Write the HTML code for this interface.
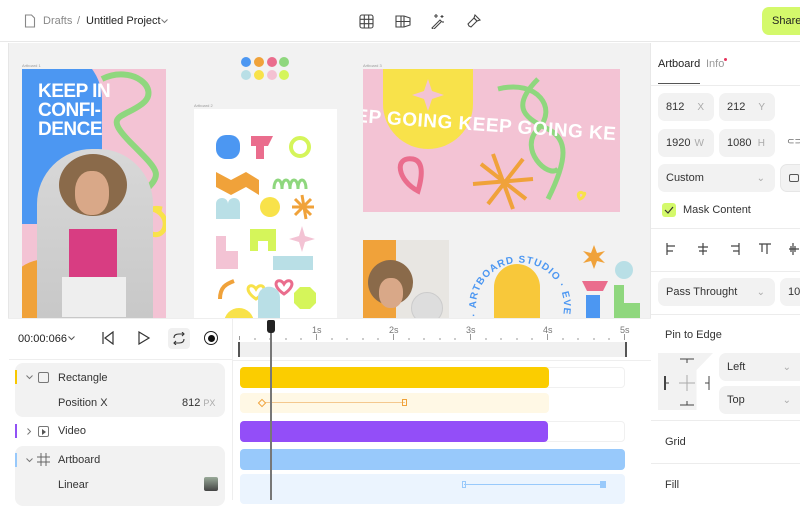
<!DOCTYPE html>
<html><head><meta charset="utf-8"><style>
*{box-sizing:border-box;margin:0;padding:0}
body{width:800px;height:500px;overflow:hidden;background:#fff;font-family:"Liberation Sans",sans-serif;position:relative;color:#222}
.a{position:absolute}
.t{font-size:11px;color:#333;white-space:nowrap}
.inp{position:absolute;background:#f2f2f2;border-radius:7px;font-size:11px;color:#333;padding-left:8px;display:flex;align-items:center}
.inp span{position:absolute;right:10px;color:#aaa;font-size:10px}
.dv{position:absolute;left:651px;right:0;height:1px;background:#ececec}
.dot{position:absolute;width:10px;height:10px;border-radius:50%}
.lbl{position:absolute;font-size:4px;color:#999}
</style></head><body>
<!-- top bar -->
<div class="a" style="left:0;top:0;width:800px;height:42px;border-bottom:1px solid #e8e8e8;background:#fff"></div>
<svg class="a" style="left:24px;top:14px" width="12" height="14" viewBox="0 0 12 14"><path d="M1.5 1h6l3 3v9h-9z" fill="none" stroke="#888" stroke-width="1.1"/></svg>
<div class="a t" style="left:43px;top:15px;font-size:11px;color:#888">Drafts</div>
<div class="a t" style="left:77px;top:15px;font-size:11px;color:#888">/</div>
<div class="a t" style="left:86px;top:15px;font-size:11px;color:#222">Untitled Project</div>
<svg class="a" style="left:161px;top:19px" width="7" height="5"><path d="M.5 .5l3 3 3-3" fill="none" stroke="#777"/></svg>
<svg class="a" style="left:359px;top:14px" width="15" height="15"><g fill="none" stroke="#444" stroke-width="1.1"><rect x="1" y="1" width="13" height="13" rx="2"/><path d="M5.3 1v13M9.7 1v13M1 5.3h13M1 9.7h13"/></g></svg>
<svg class="a" style="left:395px;top:14px" width="16" height="15"><g fill="none" stroke="#444" stroke-width="1.1"><path d="M1 2h8l6 2v7l-6 2H1z"/><path d="M6 2v11M9 2v11M1 7.5h14"/></g></svg>
<svg class="a" style="left:430px;top:13px" width="16" height="16"><g fill="none" stroke="#444" stroke-width="1.1"><path d="M2 15l8-8 1.5 1.5-8 8z"/><path d="M6 1v4M4 3h4M12 2v3M10.5 3.5h3M13 8v2"/></g></svg>
<svg class="a" style="left:466px;top:13px" width="16" height="16"><g fill="none" stroke="#444" stroke-width="1.1"><path d="M9 2l5 5-3 1-3-3z"/><path d="M8 5l3 3-6 6-2-1-1-2z"/></g></svg>
<div class="a" style="left:762px;top:7px;width:50px;height:28px;background:#d4f96b;border-radius:7px;font-size:11px;padding:8px 0 0 10px;color:#222">Share</div>

<!-- canvas -->
<div class="a" style="left:8px;top:43px;width:643px;height:275px;background:#f2f2f2"></div>
<div class="a" style="left:8px;top:43px;width:1px;height:457px;background:#e6e6e6"></div>
<div class="lbl" style="left:22px;top:63px">Artboard 1</div>
<div class="lbl" style="left:194px;top:103px">Artboard 2</div>
<div class="lbl" style="left:363px;top:63px">Artboard 3</div>

<!-- dots -->
<div class="dot" style="left:241px;top:57px;background:#4c97f2"></div>
<div class="dot" style="left:254px;top:57px;background:#f0a23a"></div>
<div class="dot" style="left:267px;top:57px;background:#ea6d8d"></div>
<div class="dot" style="left:279px;top:57px;background:#8fd77e"></div>
<div class="dot" style="left:241px;top:70px;background:#b9dfe6"></div>
<div class="dot" style="left:254px;top:70px;background:#f8e24a"></div>
<div class="dot" style="left:267px;top:70px;background:#f4c1d2"></div>
<div class="dot" style="left:279px;top:70px;background:#d5f55a"></div>

<!-- artboard 1 -->
<div class="a" style="left:22px;top:69px;width:144px;height:249px;background:#f3c3d4;overflow:hidden">
 <div class="a" style="left:-30px;top:-20px;width:110px;height:175px;background:#4c97f2;border-radius:0 50px 50px 0"></div>
 <div class="a" style="left:-20px;top:190px;width:90px;height:90px;background:#f0a23a;border-radius:50%"></div>
 <svg class="a" style="left:0;top:0" width="144" height="249"><g fill="none" stroke="#8fd77e" stroke-width="6"><path d="M80 10c30-15 60 10 40 25s-40 10-10 40 30 30 10 50"/></g><g fill="none" stroke="#f8e24a" stroke-width="5"><path d="M140 140c-20-5-25 20-10 25s20-20 0-25"/></g></svg>
 <div class="a" style="left:16px;top:13px;font:900 19px/19px 'Liberation Sans',sans-serif;color:#fff;letter-spacing:-.5px">KEEP IN<br>CONFI-<br>DENCE</div>
 <div class="a" style="left:15px;top:80px;width:116px;height:169px;background:linear-gradient(#d8d8d8,#c8c8c8);border-radius:55px 55px 0 0;overflow:hidden">
  <div class="a" style="left:22px;top:5px;width:68px;height:62px;background:#8a6a4a;border-radius:50%"></div>
  <div class="a" style="left:38px;top:22px;width:34px;height:44px;background:#d9a888;border-radius:45%"></div>
  <div class="a" style="left:32px;top:80px;width:48px;height:50px;background:#d83d82"></div>
  <div class="a" style="left:25px;top:128px;width:64px;height:40px;background:#eee"></div>
 </div>
</div>

<!-- artboard 2 -->
<div class="a" style="left:194px;top:109px;width:143px;height:209px;background:#fff;overflow:hidden">
 <svg width="143" height="209">
  <rect x="22" y="26" width="24" height="24" rx="10" fill="#4c97f2"/>
  <path d="M57 27h22l-5 10h-4l0 13h-8l0-13h-5z" fill="#ea6d8d"/>
  <circle cx="106" cy="38" r="9" fill="none" stroke="#d5f55a" stroke-width="4"/>
  <path d="M22 63l15 8 15-8 13 8v15l-13-8-15 8-15-8z" fill="#f0a23a"/>
  <path d="M88 80c0-12 8-12 8 0M96 80c0-12 8-12 8 0M104 80c0-12 8-12 8 0M80 80c0-12 8-12 8 0" fill="none" stroke="#8fd77e" stroke-width="3"/>
  <path d="M22 110v-15c0-8 12-8 12 0 0-8 12-8 12 0v15z" fill="#b9dfe6"/>
  <circle cx="76" cy="98" r="10" fill="#f8e24a"/>
  <path d="M108 86l4 24M98 98h22M101 90l16 16M117 90l-16 16" stroke="#f0a23a" stroke-width="3"/>
  <path d="M22 127h10v15h12v18H22z" fill="#f3c3d4"/>
  <path d="M56 120h26v22h-8v-10h-10v10h-8z" fill="#d5f55a"/>
  <path d="M108 117l3 10 10 3-10 3-3 10-3-10-10-3 10-3z" fill="#f3c3d4"/>
  <rect x="79" y="147" width="40" height="14" fill="#b9dfe6"/>
  <path d="M26 190c0-12 6-15 14-18" stroke="#f0a23a" stroke-width="4" fill="none"/>
  <path d="M62 180c-5-8-15 0 0 10 15-10 5-18 0-10z" fill="none" stroke="#f8e24a" stroke-width="3"/>
  <path d="M90 175c-5-8-15 0 0 10 15-10 5-18 0-10z" fill="none" stroke="#ea6d8d" stroke-width="3"/>
  <path d="M64 209v-20c0-15 22-15 22 0v20z" fill="#b9dfe6"/>
  <path d="M100 184l6-6h10l6 6v10l-6 6h-10l-6-6z" fill="#d5f55a"/>
  <circle cx="45" cy="214" r="15" fill="#f8e24a"/>
 </svg>
</div>

<!-- artboard 3 -->
<div class="a" style="left:363px;top:69px;width:257px;height:143px;background:#f3c3d4;overflow:hidden">
 <div class="a" style="left:20px;top:-20px;width:90px;height:100px;background:#f8e24a;border-radius:0 0 45px 45px"></div>
 <svg class="a" style="left:0;top:0" width="257" height="143">
  <path d="M65 10l4 12 12 4-12 4-4 12-4-12-12-4 12-4z" fill="#f3c3d4"/>
  <g fill="none" stroke="#8fd77e" stroke-width="5"><path d="M135 20c40-10 60 20 40 40s10 50 20 40M175 10c-30 30-10 40 10 50s20 30 0 70"/></g>
  <path d="M55 122c-20-10-25-35-5-32 10 2 10 15 5 32z" fill="none" stroke="#ea6d8d" stroke-width="5"/>
  <g stroke="#f0a23a" stroke-width="4"><path d="M130 85l20 55M110 115l60 -5M118 95l45 35M160 90l-35 45"/></g>
  <path d="M221 125c-4-4-8 0-4 5 4-1 6-8 4-5z" stroke="#f8e24a" stroke-width="3" fill="none"/>
 </svg>
 <div class="a" style="left:-8px;top:46px;font:900 19px 'Liberation Sans',sans-serif;color:#fff;transform:rotate(4deg);white-space:nowrap;letter-spacing:0.5px">EP GOING KEEP GOING KE</div>
</div>

<!-- bottom artboards -->
<div class="a" style="left:363px;top:240px;width:86px;height:78px;background:#e8e6e2;overflow:hidden">
 <div class="a" style="left:0;top:0;width:33px;height:78px;background:#f0a23a"></div>
 <div class="a" style="left:5px;top:20px;width:45px;height:45px;background:#8a6a4a;border-radius:50%"></div>
 <div class="a" style="left:16px;top:38px;width:24px;height:30px;background:#d9a888;border-radius:45%"></div>
 <div class="a" style="left:48px;top:52px;width:32px;height:32px;border-radius:50%;background:#ddd;border:1px solid #ccc"></div>
</div>
<div class="a" style="left:494px;top:264px;width:46px;height:70px;background:#f8c83a;border-radius:23px 23px 0 0"></div>
<svg class="a" style="left:465px;top:228px" width="110" height="92"><defs><path id="ring" d="M12 88A44 44 0 1 1 98 88"/></defs><text font-family="Liberation Sans" font-size="10" font-weight="bold" fill="#4c97f2" letter-spacing="1"><textPath href="#ring">· ARTBOARD STUDIO · EVERYONE DES</textPath></text></svg>
<svg class="a" style="left:578px;top:243px" width="62" height="75"><path d="M16 2l3 8 8-2-6 6 6 6-8-2-3 8-3-8-8 2 6-6-6-6 8 2z" fill="#f0a23a"/><circle cx="46" cy="27" r="9" fill="#b9dfe6"/><path d="M4 38h26l-5 10h-16z" fill="#ea6d8d"/><rect x="8" y="52" width="14" height="23" fill="#4c97f2"/><path d="M36 42h10v18h16v15H36z" fill="#8fd77e"/></svg>

<!-- right panel -->
<div class="a" style="left:650px;top:43px;width:1px;height:457px;background:#e8e8e8"></div>
<div class="a t" style="left:658px;top:58px;color:#222">Artboard</div>
<div class="a t" style="left:706px;top:58px;color:#999">Info</div>
<div class="a" style="left:724px;top:58px;width:3px;height:3px;border-radius:50%;background:#e5335c"></div>
<div class="a" style="left:658px;top:83px;width:42px;height:1px;background:#555"></div>
<div class="dv" style="top:85px"></div>
<div class="inp" style="left:658px;top:93px;width:56px;height:28px">812<span>X</span></div>
<div class="inp" style="left:719px;top:93px;width:56px;height:28px">212<span>Y</span></div>
<div class="inp" style="left:658px;top:129px;width:56px;height:28px">1920<span>W</span></div>
<div class="inp" style="left:719px;top:129px;width:56px;height:28px">1080<span>H</span></div>
<div class="a t" style="left:787px;top:136px;color:#555;font-size:9px">⊂⊃</div>
<div class="inp" style="left:658px;top:164px;width:117px;height:28px">Custom<span>⌄</span></div>
<div class="a" style="left:780px;top:164px;width:30px;height:28px;border:1px solid #e6e6e6;border-radius:7px;background:#f2f2f2"></div>
<div class="a" style="left:789px;top:174px;width:10px;height:8px;border:1px solid #555;border-radius:2px"></div>
<div class="a" style="left:662px;top:203px;width:14px;height:14px;background:#d4f96b;border-radius:3px"></div>
<svg class="a" style="left:664px;top:206px" width="10" height="8"><path d="M1 4l3 3 5-6" fill="none" stroke="#333" stroke-width="1.2"/></svg>
<div class="a t" style="left:683px;top:204px">Mask Content</div>
<div class="dv" style="top:228px"></div>
<svg class="a" style="left:665px;top:242px" width="135" height="14"><g stroke="#444" stroke-width="1.2" fill="none"><path d="M2 1v12M2 4h8M2 9h6"/><path d="M38 1v12M33 5h10M34 9h8"/><path d="M74 1v12M66 4h8M68 9h6"/><path d="M94 2h12M97 2v8M102 2v10"/><path d="M128 1v12M124 7h10M126 4v6M130 4v6"/></g></svg>
<div class="dv" style="top:271px"></div>
<div class="inp" style="left:658px;top:278px;width:117px;height:28px">Pass Throught<span>⌄</span></div>
<div class="inp" style="left:780px;top:278px;width:30px;height:28px">100</div>
<div class="dv" style="top:314px"></div>
<div class="a t" style="left:665px;top:329px">Pin to Edge</div>
<div class="a" style="left:658px;top:353px;width:55px;height:57px;background:#f2f2f2;clip-path:polygon(0 0,100% 0,70% 30%,70% 100%,30% 100%,0 100%)"></div>
<svg class="a" style="left:658px;top:353px" width="55" height="57"><g stroke="#444" stroke-width="1"><path d="M22 6h14M29 6v4"/><path d="M7 23v14" stroke-width="2"/><path d="M7 30h4"/><path d="M22 52h14M29 48v4"/><path d="M51 23v14M47 30h4"/></g><path d="M29 22v16M21 30h16" stroke="#aaa"/></svg>
<div class="inp" style="left:719px;top:353px;width:90px;height:28px">Left<span style="right:18px">⌄</span></div>
<div class="inp" style="left:719px;top:386px;width:90px;height:28px">Top<span style="right:18px">⌄</span></div>
<div class="dv" style="top:420px"></div>
<div class="a t" style="left:665px;top:436px">Grid</div>
<div class="dv" style="top:463px"></div>
<div class="a t" style="left:665px;top:479px">Fill</div>

<!-- bottom panel -->
<div class="a" style="left:8px;top:318px;width:643px;height:182px;background:#fff;border-top:1px solid #eee"></div>
<div class="a" style="left:232px;top:318px;width:1px;height:182px;background:#eee"></div>
<div class="a" style="left:9px;top:359px;width:223px;height:1px;background:#eee"></div>
<div class="a t" style="left:18px;top:333px;color:#222">00:00:066</div>
<svg class="a" style="left:68px;top:336px" width="7" height="5"><path d="M.5 .5l3 3 3-3" fill="none" stroke="#555"/></svg>
<svg class="a" style="left:101px;top:331px" width="14" height="14"><path d="M2 1v12M12 1L4 7l8 6z" fill="none" stroke="#333" stroke-width="1.2"/></svg>
<svg class="a" style="left:137px;top:331px" width="14" height="14"><path d="M2 1l10 6-10 6z" fill="none" stroke="#333" stroke-width="1.2"/></svg>
<div class="a" style="left:168px;top:328px;width:22px;height:21px;background:#f0f0f0;border-radius:4px"></div>
<svg class="a" style="left:172px;top:332px" width="14" height="13"><path d="M2 6c0-3 2-4 5-4h5M10 0l2 2-2 2M12 7c0 3-2 4-5 4H2M4 13l-2-2 2-2" fill="none" stroke="#333" stroke-width="1.1"/></svg>
<div class="a" style="left:204px;top:331px;width:14px;height:14px;border:1.3px solid #222;border-radius:50%"></div>
<div class="a" style="left:207.5px;top:334.5px;width:7px;height:7px;background:#111;border-radius:50%"></div>

<div class="a" style="left:15px;top:363px;width:210px;height:54px;background:#f2f2f2;border-radius:8px"></div>
<div class="a" style="left:15px;top:370px;width:2px;height:14px;background:#f8c800"></div>
<svg class="a" style="left:26px;top:375px" width="7" height="5"><path d="M.5 .5l3 3 3-3" fill="none" stroke="#777"/></svg>
<div class="a" style="left:38px;top:372px;width:11px;height:11px;border:1px solid #777;border-radius:2px"></div>
<div class="a t" style="left:58px;top:372px">Rectangle</div>
<div class="a t" style="left:58px;top:397px">Position X</div>
<div class="a t" style="left:182px;top:397px">812 <span style="color:#aaa;font-size:9px">PX</span></div>
<div class="a" style="left:15px;top:424px;width:2px;height:14px;background:#9152f5"></div>
<svg class="a" style="left:27px;top:428px" width="5" height="7"><path d="M.5 .5l3 3-3 3" fill="none" stroke="#777"/></svg>
<div class="a" style="left:38px;top:426px;width:11px;height:11px;border:1px solid #777;border-radius:2px"></div>
<svg class="a" style="left:41px;top:429px" width="6" height="6"><path d="M1 0l4 3-4 3z" fill="#555"/></svg>
<div class="a t" style="left:58px;top:425px">Video</div>
<div class="a" style="left:15px;top:446px;width:210px;height:60px;background:#f2f2f2;border-radius:8px"></div>
<div class="a" style="left:15px;top:453px;width:2px;height:14px;background:#98c9fb"></div>
<svg class="a" style="left:26px;top:458px" width="7" height="5"><path d="M.5 .5l3 3 3-3" fill="none" stroke="#777"/></svg>
<svg class="a" style="left:37px;top:453px" width="13" height="13"><path d="M4 0v13M9 0v13M0 4h13M0 9h13" fill="none" stroke="#666"/></svg>
<div class="a t" style="left:58px;top:454px">Artboard</div>
<div class="a t" style="left:58px;top:479px">Linear</div>
<div class="a" style="left:204px;top:477px;width:14px;height:14px;background:linear-gradient(#9a9,#444);border-radius:2px"></div>

<!-- timeline -->
<svg class="a" style="left:230px;top:322px" width="420" height="20"><g stroke="#999" stroke-width="1"><path d="M9.5 14v4M86.5 12v6M163.5 12v6M240.5 12v6M317.5 12v6M394.5 12v6"/><path d="M25 16v2M40 16v2M56 16v2M71 16v2M102 16v2M117 16v2M133 16v2M148 16v2M179 16v2M194 16v2M210 16v2M225 16v2M256 16v2M271 16v2M287 16v2M302 16v2M333 16v2M348 16v2M364 16v2M379 16v2"/></g><g font-family="Liberation Sans" font-size="9" fill="#777"><text x="82" y="11">1s</text><text x="159" y="11">2s</text><text x="236" y="11">3s</text><text x="313" y="11">4s</text><text x="390" y="11">5s</text></g></svg>
<div class="a" style="left:239px;top:342px;width:387px;height:15px;background:#f0f0f0"></div>
<div class="a" style="left:238px;top:342px;width:2px;height:15px;background:#555"></div>
<div class="a" style="left:625px;top:342px;width:2px;height:15px;background:#555"></div>
<div class="a" style="left:233px;top:360px;width:418px;height:1px;background:#eee"></div>

<div class="a" style="left:240px;top:367px;width:385px;height:21px;border:1px solid #f0f0f0;border-radius:4px"></div>
<div class="a" style="left:240px;top:367px;width:309px;height:21px;background:#fbcd00;border-radius:4px"></div>
<div class="a" style="left:240px;top:393px;width:309px;height:20px;background:#fff8e5;border-radius:4px"></div>
<div class="a" style="left:263px;top:402px;width:142px;height:1px;background:#f4c88e"></div>
<div class="a" style="left:259px;top:400px;width:6px;height:6px;border:1px solid #f0a23a;transform:rotate(45deg);background:#fff8e5"></div>
<div class="a" style="left:402px;top:399px;width:5px;height:7px;border:1px solid #f0a23a"></div>
<div class="a" style="left:240px;top:421px;width:385px;height:21px;border:1px solid #f0f0f0;border-radius:4px"></div>
<div class="a" style="left:240px;top:421px;width:308px;height:21px;background:#934ef8;border-radius:4px"></div>
<div class="a" style="left:240px;top:449px;width:385px;height:21px;background:#98c9fb;border-radius:4px"></div>
<div class="a" style="left:240px;top:474px;width:385px;height:30px;background:#ebf4fe;border-radius:4px"></div>
<div class="a" style="left:464px;top:484px;width:140px;height:1px;background:#98c9fb"></div>
<div class="a" style="left:462px;top:481px;width:4px;height:7px;border:1px solid #98c9fb"></div>
<div class="a" style="left:600px;top:481px;width:6px;height:7px;background:#98c9fb"></div>

<div class="a" style="left:270px;top:325px;width:1.5px;height:175px;background:#777"></div>
<div class="a" style="left:267px;top:320px;width:8px;height:13px;background:#222;border-radius:2px 2px 3px 3px"></div>
</body></html>
